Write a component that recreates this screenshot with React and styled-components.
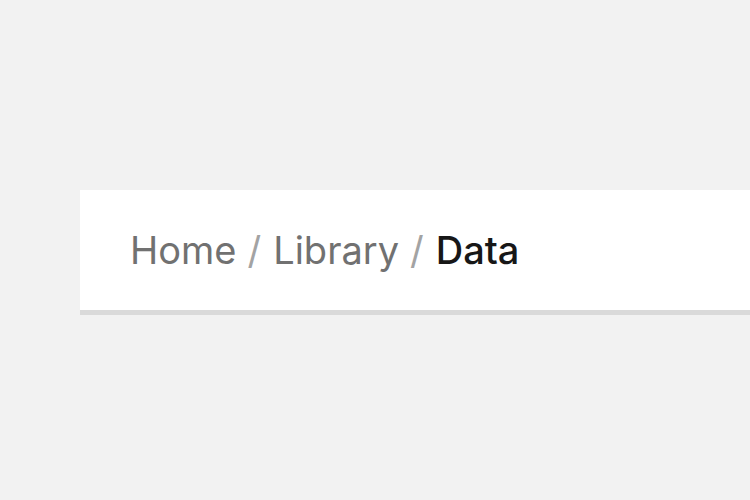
import React from "react";
import styled, { createGlobalStyle } from "styled-components";

const Global = createGlobalStyle`
  html, body { margin: 0; padding: 0; background: #f2f2f2; }
  body { font-family: Inter, "Noto Sans", sans-serif; }
`;

const Page = styled.div`
  width: 750px;
  height: 500px;
  box-sizing: border-box;
  padding: 190px 0 0 80px;
  overflow: hidden;
`;

const Bar = styled.nav`
  height: 120px;
  box-sizing: content-box;
  background: #ffffff;
  border-bottom: 5px solid #dadada;
  display: flex;
  align-items: center;
  padding-left: 50px;
`;

const Crumbs = styled.ol`
  display: flex;
  align-items: center;
  list-style: none;
  margin: 0;
  padding: 0;
  font-size: 38px;
  line-height: 1;
  white-space: nowrap;
`;

const Crumb = styled.li`
  color: ${(p) => (p.$current ? "#171717" : "#717171")};
  font-weight: ${(p) => (p.$current ? 500 : 400)};
`;

const Sep = styled.li`
  color: #a3a3a3;
  margin: 0 12px 0 11px;
`;

const items = ["Home", "Library", "Data"];

export default function App() {
  return (
    <>
      <Global />
      <Page>
        <Bar aria-label="Breadcrumb">
          <Crumbs>
            {items.map((it, i) => (
              <React.Fragment key={it}>
                {i > 0 && <Sep aria-hidden="true">/</Sep>}
                <Crumb $current={i === items.length - 1}>{it}</Crumb>
              </React.Fragment>
            ))}
          </Crumbs>
        </Bar>
      </Page>
    </>
  );
}
